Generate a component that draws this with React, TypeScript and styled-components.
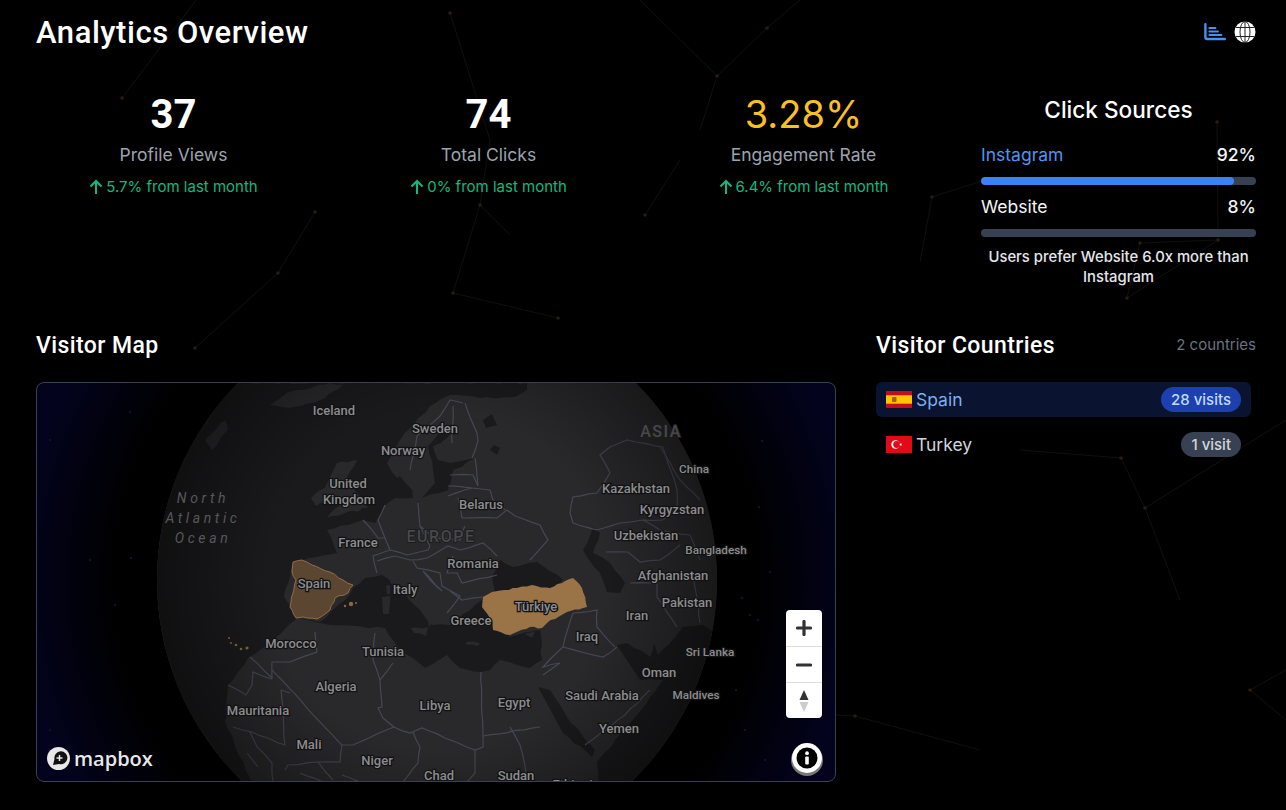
import styled, { createGlobalStyle } from "styled-components";

const GlobalStyle = createGlobalStyle`
  html, body {
    margin: 0;
    padding: 0;
    background: #000;
    color: #fff;
    font-family: Inter, "Liberation Sans", sans-serif;
  }
`;

// wobble straight segments so coasts and borders don't look ruler drawn
function rough(points: string, amount = 1.1, step = 7) {
  const pts = points.split(" ").map((p) => p.split(",").map(Number));
  let seed = pts[0][0] * 7 + pts[0][1] * 13;
  const out: string[] = [];
  pts.forEach(([x, y], i) => {
    out.push(`${x},${y}`);
    const next = pts[i + 1];
    if (!next) return;
    const dx = next[0] - x;
    const dy = next[1] - y;
    const len = Math.hypot(dx, dy);
    const n = Math.floor(len / step);
    for (let k = 1; k < n; k++) {
      seed = (seed * 9301 + 49297) % 233280;
      const off = (seed / 233280 - 0.5) * 2 * amount;
      const px = x + (dx * k) / n - (dy / len) * off;
      const py = y + (dy * k) / n + (dx / len) * off;
      out.push(`${px.toFixed(1)},${py.toFixed(1)}`);
    }
  });
  return out.join(" ");
}

const netLines = [
  "122,98 200,-5",
  "450,13 490,140 480,205 453,293 558,318",
  "480,205 510,235",
  "640,0 717,76 767,28 800,0",
  "717,76 700,130",
  "645,215 680,160",
  "315,212 278,273 195,348",
  "920,262 932,197 985,180",
  "1217,122 1218,240 1140,243 1127,298 1218,240",
  "1020,450 1121,458 1145,508 1286,420",
  "1145,508 1180,600",
  "836,715 855,716 980,750",
  "1286,670 1250,690 1286,720",
];

const netDots = [
  [122, 98], [450, 13], [480, 205], [453, 293], [717, 76], [767, 28], [315, 212], [278, 273],
  [195, 348], [932, 197], [1217, 122], [1218, 240], [1140, 243], [1127, 298], [1121, 458],
  [1145, 508], [855, 716], [1250, 690], [558, 318], [645, 215],
];

const seas = [
  // atlantic and arctic
  "150,383 527,383 527,390 515,397 480,398 450,395 430,406 400,440 387,463 397,478 400,476 412,490 413,498 395,498 385,505 375,523 363,520 327,530 337,553 293,562 284,597 297,618 270,643 248,658 228,685 225,722 255,790 150,790",
  // mediterranean
  "297,618 320,622 345,600 353,588 365,578 382,575 395,585 420,610 432,625 450,625 482,600 492,625 510,637 540,630 542,660 530,668 500,660 490,670 481,672 460,668 447,655 425,668 400,650 393,640 385,628 330,625",
  // black sea
  "492,577 500,560 513,567 537,562 563,580 550,588 530,585 508,593 495,593",
  // caspian
  "583,550 593,527 600,533 593,553 610,563 625,583 620,593 607,592 600,573 587,557",
  // red sea
  "538,687 550,690 567,717 595,750 592,757 563,733",
  // arabian sea and gulf
  "617,645 627,643 650,657 654,643 658,655 683,627 703,625 725,640 725,790 600,790 597,762 630,723 647,703 663,680 640,680",
  // baltic
  "422,498 448,490 453,470 477,458 450,463 438,460 433,446 447,438 455,425 445,425 428,446 433,470 435,483",
  // white sea and lakes
  "483,420 492,414 497,425 486,428",
  "494,445 500,448 497,455 490,450",
  "530,577 533,570 541,572 537,580",
];

const lands = [
  // uk and ireland
  "337,463 357,460 347,477 368,508 327,518 343,500 320,497 327,483",
  "311,498 326,487 330,500 316,506",
  // iceland
  "270,405 287,393 330,383 343,385 320,400 290,408",
  // greenland tip
  "205,440 225,420 228,430 212,450",
  // italy and islands
  "385,572 410,570 420,590 445,612 435,612 430,628 426,612 405,592 392,585",
  "411,628 428,627 426,636 414,633",
  "382,597 390,596 389,614 383,614",
  "386,586 390,585 390,594 387,594",
  // crete and cyprus
  "466,642 480,643 478,646 467,645",
  "525,634 535,632 532,638",
];

const borders = [
  // france, benelux, alps
  "363,520 378,538 385,538 378,520 385,505",
  "385,538 390,550 373,556 377,573",
  "377,561 395,556 410,560 427,558 448,546 460,550 483,543 497,556",
  "390,550 407,555 428,550 430,546",
  // germany and poland
  "418,503 420,526 430,546",
  "420,526 433,538 460,540 463,530 465,526",
  "458,498 462,518 497,518 507,510 515,516 540,525 548,540 530,560",
  // baltics and belarus
  "450,475 473,475 478,486 475,458",
  "448,486 472,488 490,490 493,500 505,510",
  "448,496 472,488",
  // scandinavia
  "463,403 450,400 440,416 417,436 410,470",
  "453,406 452,443",
  "465,403 477,433 478,441 472,458",
  // balkans
  "453,556 447,573 457,573 462,583 497,575",
  "413,561 417,568 440,573 442,586 460,596 447,613",
  "423,571 442,591 430,580 423,571",
  "450,591 462,600 483,597",
  // central asia
  "570,513 573,497 597,493 610,473 600,455 610,447 627,440 663,447 677,490 677,507 663,520 643,520 620,523 597,530 573,523 570,513",
  "643,520 660,530 690,535 700,560",
  "606,552 628,552 640,562 660,560 680,545",
  "660,447 680,480 700,500",
  // middle east
  "573,613 597,610 597,627 615,647",
  "563,647 603,657 617,647",
  "573,613 563,647 543,667 560,663 543,675",
  "630,583 657,583 657,597 677,627",
  "677,580 693,573 697,597 700,623",
  "585,745 625,715 650,690",
  // africa
  "315,632 317,652 290,662 272,662 272,678 250,657",
  "272,679 253,672 252,685 246,695 228,685",
  "272,670 337,740 342,745 353,745 394,727",
  "281,690 290,693",
  "281,690 285,745 252,732 233,727",
  "375,633 373,660 380,680 382,707 378,708 383,718 394,727",
  "380,680 393,663",
  "394,727 410,733 422,728 475,750 483,747 481,672",
  "483,736 540,727",
  "413,732 420,747 418,763 403,782",
  "342,745 340,762 318,762 288,765 285,770",
  "475,750 475,773 467,782",
  "250,732 257,747 272,763 273,782",
  "247,753 258,767",
  "318,762 333,780",
  "342,775 360,782",
  "300,773 323,782",
  "510,727 520,745 530,790",
];

const islands = [
  [229, 638, 1], [231, 643, 1], [236, 645, 1.3], [241, 649, 1.3], [247, 648, 1.6],
  [345, 606, 1.2], [351, 604, 2.2], [356, 603, 1],
];

const mapLabels: { text: string; x: number; y: number; small?: boolean }[] = [
  { text: "Iceland", x: 334, y: 411 },
  { text: "Sweden", x: 435, y: 429 },
  { text: "Norway", x: 403, y: 451 },
  { text: "United", x: 348, y: 484 },
  { text: "Kingdom", x: 349, y: 500 },
  { text: "Belarus", x: 481, y: 505 },
  { text: "France", x: 358, y: 543 },
  { text: "Romania", x: 473, y: 564 },
  { text: "Spain", x: 314, y: 584 },
  { text: "Italy", x: 405, y: 590 },
  { text: "Greece", x: 471, y: 621 },
  { text: "Türkiye", x: 536, y: 607 },
  { text: "Morocco", x: 291, y: 644 },
  { text: "Tunisia", x: 383, y: 652 },
  { text: "Algeria", x: 336, y: 687 },
  { text: "Libya", x: 435, y: 706 },
  { text: "Egypt", x: 514, y: 703 },
  { text: "Mauritania", x: 258, y: 711 },
  { text: "Mali", x: 309, y: 745 },
  { text: "Niger", x: 377, y: 761 },
  { text: "Chad", x: 439, y: 776 },
  { text: "Sudan", x: 516, y: 776 },
  { text: "Ethiopia", x: 576, y: 785 },
  { text: "Iraq", x: 587, y: 637 },
  { text: "Iran", x: 637, y: 616 },
  { text: "Saudi Arabia", x: 602, y: 696 },
  { text: "Yemen", x: 619, y: 729 },
  { text: "Oman", x: 659, y: 673 },
  { text: "Kazakhstan", x: 636, y: 489 },
  { text: "Kyrgyzstan", x: 672, y: 510 },
  { text: "Uzbekistan", x: 646, y: 536 },
  { text: "Afghanistan", x: 673, y: 576 },
  { text: "Pakistan", x: 687, y: 603 },
  { text: "China", x: 694, y: 469, small: true },
  { text: "Bangladesh", x: 716, y: 550, small: true },
  { text: "Sri Lanka", x: 710, y: 652, small: true },
  { text: "Maldives", x: 696, y: 695, small: true },
];

const stars = [
  [130, 412], [115, 605], [131, 558], [50, 730], [762, 441], [759, 507], [770, 572], [742, 598],
  [750, 615], [758, 620], [736, 690], [745, 730], [765, 760], [798, 660], [50, 440], [90, 560],
];

const stats = [
  { value: "37", label: "Profile Views", change: "5.7% from last month" },
  { value: "74", label: "Total Clicks", change: "0% from last month" },
  { value: "3.28%", label: "Engagement Rate", change: "6.4% from last month", highlight: true },
];

function UpArrow() {
  return (
    <svg width="14" height="16" viewBox="0 0 14 16" fill="none" stroke="currentColor" strokeWidth="2">
      <path d="M7 15V2M1.5 7.5 7 2l5.5 5.5" />
    </svg>
  );
}

function BarsIcon() {
  return (
    <svg width="22" height="18" viewBox="0 0 22 18" fill="none" stroke="#4a90f0" strokeLinecap="round">
      <path d="M1.4 1.2v12.8q0 2 2 2h17.4" strokeWidth="2.4" />
      <path d="M5.4 5h6M5.4 8.5h8.5M5.4 12h12" strokeWidth="2" />
    </svg>
  );
}

function GlobeIcon() {
  return (
    <svg width="22" height="22" viewBox="0 0 22 22">
      <circle cx="11" cy="11" r="10.5" fill="#fff" />
      <g fill="none" stroke="#222" strokeWidth="1">
        <ellipse cx="11" cy="11" rx="5" ry="10.5" />
        <path d="M11 .5v21M1.6 6.5h18.8M1.6 15.5h18.8" />
      </g>
    </svg>
  );
}

function SpainFlag() {
  return (
    <svg width="26" height="17" viewBox="0 0 26 17">
      <rect width="26" height="17" fill="#c60b1e" />
      <rect y="4.3" width="26" height="8.4" fill="#ffc400" />
      <rect x="6" y="6" width="4.5" height="5" rx="1" fill="#ad5b19" />
    </svg>
  );
}

function TurkeyFlag() {
  return (
    <svg width="26" height="17" viewBox="0 0 26 17">
      <rect width="26" height="17" fill="#e30a17" />
      <circle cx="9.5" cy="8.5" r="4.2" fill="#fff" />
      <circle cx="10.6" cy="8.5" r="3.4" fill="#e30a17" />
      <path d="m13 8.5 3.2-1.1-2 2.7V6.9l2 2.7z" fill="#fff" />
    </svg>
  );
}

function MapDrawing() {
  return (
    <SMapSvg viewBox="37 383 798 398">
      <defs>
        <clipPath id="globe">
          <circle cx="437" cy="580" r="280" />
        </clipPath>
        <radialGradient id="shade" gradientUnits="userSpaceOnUse" cx="437" cy="580" r="280">
          <stop offset="0.6" stopColor="#000" stopOpacity="0" />
          <stop offset="1" stopColor="#000" stopOpacity="0.4" />
        </radialGradient>
      </defs>
      {stars.map(([x, y]) => (
        <circle key={`${x}-${y}`} cx={x} cy={y} r="1.2" fill="#12122a" />
      ))}
      <circle cx="437" cy="580" r="280" fill="#29292b" />
      <g clipPath="url(#globe)">
        {seas.map((points) => (
          <polygon key={points} points={rough(points)} fill="#1a1a1c" />
        ))}
        {lands.map((points) => (
          <polygon key={points} points={rough(points, 1.2, 5)} fill="#29292b" />
        ))}
        {borders.map((points) => (
          <polyline key={points} points={rough(points, 0.6, 8)} fill="none" stroke="#464755" strokeWidth="1.2" />
        ))}
        <polygon
          points={rough("293,562 302,560 312,565 330,572 343,580 353,585 348,593 335,598 330,610 317,619 303,617 296,618 290,607 293,593 296,580 292,572", 0.8, 4)}
          fill="#5a4631"
          stroke="#a37a4e"
          strokeWidth="0.8"
        />
        <polygon
          points={rough("483,597 492,592 517,588 532,585 550,588 573,578 582,588 587,607 567,612 547,623 542,628 530,627 510,635 493,630 492,620 482,607", 0.9, 4)}
          fill="#9a7346"
        />
        {islands.map(([x, y, r]) => (
          <circle key={`${x}-${y}`} cx={x} cy={y} r={r} fill="#8a683f" />
        ))}
        <circle cx="437" cy="580" r="280" fill="url(#shade)" />
      </g>
      <SContinent x="441" y="542">EUROPE</SContinent>
      <SContinent x="661" y="437">ASIA</SContinent>
      <SOcean x="203" y="503">North</SOcean>
      <SOcean x="203" y="523">Atlantic</SOcean>
      <SOcean x="203" y="543">Ocean</SOcean>
      {mapLabels.map((l) => (
        <SPlace key={l.text} x={l.x} y={l.y + 4} $small={l.small}>
          {l.text}
        </SPlace>
      ))}
    </SMapSvg>
  );
}

export default function App() {
  return (
    <>
      <GlobalStyle />
      <SBackdrop viewBox="0 0 1286 810">
        {netLines.map((points) => (
          <polyline key={points} points={points} fill="none" stroke="#13100b" strokeWidth="1" />
        ))}
        {netDots.map(([x, y]) => (
          <circle key={`${x}-${y}`} cx={x} cy={y} r="1.8" fill="#2a1d0c" />
        ))}
      </SBackdrop>
      <SPage>
        <SHeader>
          <STitle>Analytics Overview</STitle>
          <SIcons>
            <BarsIcon />
            <GlobeIcon />
          </SIcons>
        </SHeader>

        <SStatsGrid>
          {stats.map((s) => (
            <SStat key={s.label}>
              <SValue $highlight={s.highlight}>{s.value}</SValue>
              <SLabel>{s.label}</SLabel>
              <SChange>
                <UpArrow />
                {s.change}
              </SChange>
            </SStat>
          ))}
          <SSources>
            <SSourcesTitle>Click Sources</SSourcesTitle>
            <SSourceRow $active>
              <span>Instagram</span>
              <SPercent>92%</SPercent>
            </SSourceRow>
            <STrack>
              <SFill style={{ width: "92%" }} />
            </STrack>
            <SSourceRow>
              <span>Website</span>
              <SPercent>8%</SPercent>
            </SSourceRow>
            <STrack />
            <SNote>Users prefer Website 6.0x more than Instagram</SNote>
          </SSources>
        </SStatsGrid>

        <SBottom>
          <section>
            <SSectionTitle>Visitor Map</SSectionTitle>
            <SMap>
              <MapDrawing />
              <SMapLogo>
                <svg width="23" height="23" viewBox="0 0 23 23">
                  <circle cx="11.5" cy="11.5" r="11.5" fill="#e8e8e8" />
                  <path d="M6 18l1.5-6a6.5 6.5 0 1 1 4.5 5z" fill="#111" />
                  <path d="M12.5 8v6M9.5 11h6" stroke="#e8e8e8" strokeWidth="1.5" />
                </svg>
                mapbox
              </SMapLogo>
              <SControls>
                <SControlButton>
                  <svg width="16" height="16" viewBox="0 0 16 16">
                    <path d="M8 1.5v13M1.5 8h13" stroke="#333" strokeWidth="3.2" strokeLinecap="round" />
                  </svg>
                </SControlButton>
                <SControlButton>
                  <svg width="16" height="16" viewBox="0 0 16 16">
                    <path d="M1.5 8h13" stroke="#333" strokeWidth="3.2" strokeLinecap="round" />
                  </svg>
                </SControlButton>
                <SControlButton>
                  <svg width="12" height="24" viewBox="0 0 12 24">
                    <path d="M6 1l4.5 10h-9z" fill="#333" />
                    <path d="M6 23l4.5-10h-9z" fill="#ccc" />
                  </svg>
                </SControlButton>
              </SControls>
              <SInfo>
                <svg width="22" height="22" viewBox="0 0 22 22">
                  <circle cx="11" cy="11" r="10.5" fill="#000" />
                  <circle cx="11" cy="6.2" r="1.9" fill="#fff" />
                  <rect x="9.2" y="9.4" width="3.6" height="8" rx="1" fill="#fff" />
                </svg>
              </SInfo>
            </SMap>
          </section>
          <section>
            <SCountriesHead>
              <SSectionTitle>Visitor Countries</SSectionTitle>
              <SCount>2 countries</SCount>
            </SCountriesHead>
            <SCountryList>
              <SCountry $active>
                <SCountryName>
                  <SpainFlag />
                  Spain
                </SCountryName>
                <SVisits $active>28 visits</SVisits>
              </SCountry>
              <SCountry>
                <SCountryName>
                  <TurkeyFlag />
                  Turkey
                </SCountryName>
                <SVisits>1 visit</SVisits>
              </SCountry>
            </SCountryList>
          </section>
        </SBottom>
      </SPage>
    </>
  );
}

const SBackdrop = styled.svg`
  position: absolute;
  left: 0;
  top: 0;
  width: 1286px;
  height: 810px;
`;

const SPage = styled.div`
  position: relative;
  box-sizing: border-box;
  width: 1286px;
  height: 810px;
  padding: 14px 30px 0 36px;
  overflow: hidden;
`;

const SHeader = styled.header`
  display: flex;
  align-items: center;
  justify-content: space-between;
  height: 36px;
`;

const STitle = styled.h1`
  margin: 0;
  padding-top: 2px;
  font-family: Roboto, sans-serif;
  font-size: 31px;
  line-height: 36px;
  font-weight: 500;
  letter-spacing: 0.55px;
`;

const SIcons = styled.div`
  display: flex;
  align-items: center;
  gap: 8px;
`;

const SStatsGrid = styled.div`
  display: grid;
  grid-template-columns: repeat(4, 275px);
  column-gap: 40px;
  margin-top: 40px;
`;

const SStat = styled.div`
  text-align: center;
`;

const SValue = styled.div<{ $highlight?: boolean }>`
  height: 48px;
  font-family: ${(p) => (p.$highlight ? "Inter" : "Roboto")}, sans-serif;
  font-size: ${(p) => (p.$highlight ? "38px" : "40px")};
  line-height: ${(p) => (p.$highlight ? "48px" : "50px")};
  font-weight: ${(p) => (p.$highlight ? 400 : 700)};
  color: ${(p) => (p.$highlight ? "#fbbf24" : "#fff")};
`;

const SLabel = styled.div`
  margin-top: 3px;
  font-size: 17.5px;
  line-height: 28px;
  color: #9ca3af;
`;

const SChange = styled.div`
  display: flex;
  align-items: center;
  justify-content: center;
  gap: 3px;
  margin-top: 8px;
  font-size: 15px;
  line-height: 20px;
  color: #10b981;
`;

const SSources = styled.div`
  padding-top: 6px;
`;

const SSourcesTitle = styled.h2`
  margin: 0 0 18px;
  text-align: center;
  font-size: 22.6px;
  line-height: 28px;
  font-weight: 500;
`;

const SSourceRow = styled.div<{ $active?: boolean }>`
  display: flex;
  justify-content: space-between;
  font-size: 17.5px;
  line-height: 26px;
  color: ${(p) => (p.$active ? "#4f94f0" : "#f3f4f6")};
`;

const SPercent = styled.span`
  color: #f3f4f6;
  font-weight: 500;
`;

const STrack = styled.div`
  height: 8px;
  margin: 9px 0;
  border-radius: 4px;
  background: #374151;
  overflow: hidden;
`;

const SFill = styled.div`
  height: 100%;
  border-radius: 4px;
  background: #3b82f6;
`;

const SNote = styled.p`
  margin: 10px 0 0;
  text-align: center;
  font-size: 14.85px;
  line-height: 20px;
  font-weight: 500;
  color: #e5e7eb;
`;

const SBottom = styled.div`
  display: grid;
  grid-template-columns: 800px 380px;
  column-gap: 40px;
  margin-top: 44px;
`;

const SSectionTitle = styled.h2`
  margin: 0 0 22px;
  padding-top: 1px;
  font-family: Roboto, sans-serif;
  font-size: 23px;
  line-height: 28px;
  font-weight: 500;
  letter-spacing: 0.4px;
`;

const SMap = styled.div`
  position: relative;
  box-sizing: border-box;
  width: 800px;
  height: 400px;
  border: 1px solid #374151;
  border-radius: 8px;
  overflow: hidden;
  background: radial-gradient(circle 420px at 400px 198px, #000 76%, #03031e 100%);
`;

const SMapSvg = styled.svg`
  display: block;
  width: 798px;
  height: 398px;
`;

const SPlace = styled.text<{ $small?: boolean }>`
  font-family: Roboto, sans-serif;
  font-size: ${(p) => (p.$small ? "11.7px" : "13px")};
  font-weight: 500;
  text-anchor: middle;
  fill: #8c8c8e;
  stroke: #121213;
  stroke-width: 2.5px;
  paint-order: stroke;
`;

const SContinent = styled.text`
  font-family: Roboto, sans-serif;
  font-size: 16px;
  font-weight: 500;
  letter-spacing: 1.5px;
  text-anchor: middle;
  fill: #48484b;
  stroke: #1c1c1e;
  stroke-width: 2px;
  paint-order: stroke;
`;

const SOcean = styled.text`
  font-family: Roboto, sans-serif;
  font-size: 14px;
  font-style: italic;
  letter-spacing: 3.6px;
  text-anchor: middle;
  fill: #58585b;
`;

const SMapLogo = styled.div`
  position: absolute;
  left: 10px;
  bottom: 11px;
  display: flex;
  align-items: center;
  gap: 4px;
  font-family: "Open Sans", sans-serif;
  font-size: 20px;
  line-height: 23px;
  font-weight: 600;
  color: #e8e8e8;
`;

const SControls = styled.div`
  position: absolute;
  right: 13px;
  top: 227px;
  width: 36px;
  border-radius: 4px;
  background: #fff;
  overflow: hidden;
`;

const SControlButton = styled.div`
  display: flex;
  align-items: center;
  justify-content: center;
  box-sizing: border-box;
  height: 36px;
  & + & {
    border-top: 1px solid #ddd;
  }
`;

const SInfo = styled.div`
  position: absolute;
  right: 13px;
  bottom: 8px;
  display: flex;
  align-items: center;
  justify-content: center;
  width: 30px;
  height: 30px;
  border-radius: 50%;
  background: #fff;
  box-shadow: 0 2px 0 1px #777;
`;

const SCountriesHead = styled.div`
  display: flex;
  justify-content: space-between;
  align-items: flex-start;
`;

const SCount = styled.span`
  font-size: 15px;
  line-height: 28px;
  color: #6b7280;
`;

const SCountryList = styled.div`
  display: flex;
  flex-direction: column;
  gap: 10px;
  width: 375px;
`;

const SCountry = styled.div<{ $active?: boolean }>`
  display: flex;
  align-items: center;
  justify-content: space-between;
  box-sizing: border-box;
  height: 35px;
  padding: 0 10px;
  border-radius: 6px;
  background: ${(p) => (p.$active ? "#0a1330" : "transparent")};
  color: ${(p) => (p.$active ? "#7db0ee" : "#d1d5db")};
`;

const SCountryName = styled.div`
  display: flex;
  align-items: center;
  gap: 4px;
  font-size: 17.5px;
`;

const SVisits = styled.span<{ $active?: boolean }>`
  padding: 0 10px;
  border-radius: 13px;
  font-size: 15px;
  font-weight: 500;
  line-height: 25px;
  background: ${(p) => (p.$active ? "#1e40af" : "#374151")};
  color: ${(p) => (p.$active ? "#bfdbfe" : "#d1d5db")};
`;
